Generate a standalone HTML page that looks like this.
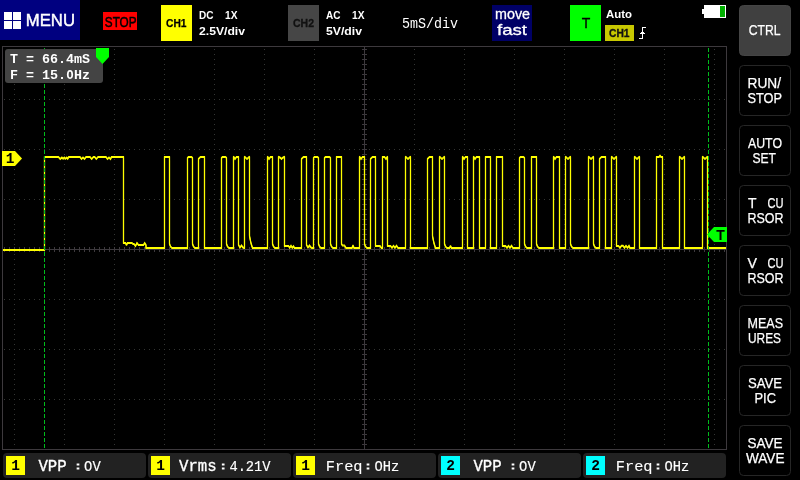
<!DOCTYPE html>
<html><head><meta charset="utf-8"><title>scope</title>
<style>html,body{margin:0;padding:0;background:#000;overflow:hidden}svg{display:block;will-change:transform}text{font-family:"Liberation Sans",sans-serif}.m{font-family:"Liberation Mono",monospace}</style></head><body>
<svg width="800" height="480" viewBox="0 0 800 480">
<rect x="0" y="0" width="800" height="480" fill="#000" />
<g shape-rendering="crispEdges" fill="#343634"><rect x="2" y="46" width="725" height="1" fill="#3d393d"/><rect x="2" y="449" width="725" height="1" fill="#3d393d"/><rect x="2" y="46" width="1" height="404" fill="#3d393d"/><rect x="726" y="46" width="1" height="404" fill="#3d393d"/><path d="M14 49h1v1h-1zM14 54h1v1h-1zM14 59h1v1h-1zM14 64h1v1h-1zM14 69h1v1h-1zM14 74h1v1h-1zM14 79h1v1h-1zM14 84h1v1h-1zM14 89h1v1h-1zM14 94h1v1h-1zM14 99h1v1h-1zM14 104h1v1h-1zM14 109h1v1h-1zM14 114h1v1h-1zM14 119h1v1h-1zM14 124h1v1h-1zM14 129h1v1h-1zM14 134h1v1h-1zM14 139h1v1h-1zM14 144h1v1h-1zM14 149h1v1h-1zM14 154h1v1h-1zM14 159h1v1h-1zM14 164h1v1h-1zM14 169h1v1h-1zM14 174h1v1h-1zM14 179h1v1h-1zM14 184h1v1h-1zM14 189h1v1h-1zM14 194h1v1h-1zM14 199h1v1h-1zM14 204h1v1h-1zM14 209h1v1h-1zM14 214h1v1h-1zM14 219h1v1h-1zM14 224h1v1h-1zM14 229h1v1h-1zM14 234h1v1h-1zM14 239h1v1h-1zM14 244h1v1h-1zM14 249h1v1h-1zM14 254h1v1h-1zM14 259h1v1h-1zM14 264h1v1h-1zM14 269h1v1h-1zM14 274h1v1h-1zM14 279h1v1h-1zM14 284h1v1h-1zM14 289h1v1h-1zM14 294h1v1h-1zM14 299h1v1h-1zM14 304h1v1h-1zM14 309h1v1h-1zM14 314h1v1h-1zM14 319h1v1h-1zM14 324h1v1h-1zM14 329h1v1h-1zM14 334h1v1h-1zM14 339h1v1h-1zM14 344h1v1h-1zM14 349h1v1h-1zM14 354h1v1h-1zM14 359h1v1h-1zM14 364h1v1h-1zM14 369h1v1h-1zM14 374h1v1h-1zM14 379h1v1h-1zM14 384h1v1h-1zM14 389h1v1h-1zM14 394h1v1h-1zM14 399h1v1h-1zM14 404h1v1h-1zM14 409h1v1h-1zM14 414h1v1h-1zM14 419h1v1h-1zM14 424h1v1h-1zM14 429h1v1h-1zM14 434h1v1h-1zM14 439h1v1h-1zM14 444h1v1h-1zM64 49h1v1h-1zM64 54h1v1h-1zM64 59h1v1h-1zM64 64h1v1h-1zM64 69h1v1h-1zM64 74h1v1h-1zM64 79h1v1h-1zM64 84h1v1h-1zM64 89h1v1h-1zM64 94h1v1h-1zM64 99h1v1h-1zM64 104h1v1h-1zM64 109h1v1h-1zM64 114h1v1h-1zM64 119h1v1h-1zM64 124h1v1h-1zM64 129h1v1h-1zM64 134h1v1h-1zM64 139h1v1h-1zM64 144h1v1h-1zM64 149h1v1h-1zM64 154h1v1h-1zM64 159h1v1h-1zM64 164h1v1h-1zM64 169h1v1h-1zM64 174h1v1h-1zM64 179h1v1h-1zM64 184h1v1h-1zM64 189h1v1h-1zM64 194h1v1h-1zM64 199h1v1h-1zM64 204h1v1h-1zM64 209h1v1h-1zM64 214h1v1h-1zM64 219h1v1h-1zM64 224h1v1h-1zM64 229h1v1h-1zM64 234h1v1h-1zM64 239h1v1h-1zM64 244h1v1h-1zM64 249h1v1h-1zM64 254h1v1h-1zM64 259h1v1h-1zM64 264h1v1h-1zM64 269h1v1h-1zM64 274h1v1h-1zM64 279h1v1h-1zM64 284h1v1h-1zM64 289h1v1h-1zM64 294h1v1h-1zM64 299h1v1h-1zM64 304h1v1h-1zM64 309h1v1h-1zM64 314h1v1h-1zM64 319h1v1h-1zM64 324h1v1h-1zM64 329h1v1h-1zM64 334h1v1h-1zM64 339h1v1h-1zM64 344h1v1h-1zM64 349h1v1h-1zM64 354h1v1h-1zM64 359h1v1h-1zM64 364h1v1h-1zM64 369h1v1h-1zM64 374h1v1h-1zM64 379h1v1h-1zM64 384h1v1h-1zM64 389h1v1h-1zM64 394h1v1h-1zM64 399h1v1h-1zM64 404h1v1h-1zM64 409h1v1h-1zM64 414h1v1h-1zM64 419h1v1h-1zM64 424h1v1h-1zM64 429h1v1h-1zM64 434h1v1h-1zM64 439h1v1h-1zM64 444h1v1h-1zM114 49h1v1h-1zM114 54h1v1h-1zM114 59h1v1h-1zM114 64h1v1h-1zM114 69h1v1h-1zM114 74h1v1h-1zM114 79h1v1h-1zM114 84h1v1h-1zM114 89h1v1h-1zM114 94h1v1h-1zM114 99h1v1h-1zM114 104h1v1h-1zM114 109h1v1h-1zM114 114h1v1h-1zM114 119h1v1h-1zM114 124h1v1h-1zM114 129h1v1h-1zM114 134h1v1h-1zM114 139h1v1h-1zM114 144h1v1h-1zM114 149h1v1h-1zM114 154h1v1h-1zM114 159h1v1h-1zM114 164h1v1h-1zM114 169h1v1h-1zM114 174h1v1h-1zM114 179h1v1h-1zM114 184h1v1h-1zM114 189h1v1h-1zM114 194h1v1h-1zM114 199h1v1h-1zM114 204h1v1h-1zM114 209h1v1h-1zM114 214h1v1h-1zM114 219h1v1h-1zM114 224h1v1h-1zM114 229h1v1h-1zM114 234h1v1h-1zM114 239h1v1h-1zM114 244h1v1h-1zM114 249h1v1h-1zM114 254h1v1h-1zM114 259h1v1h-1zM114 264h1v1h-1zM114 269h1v1h-1zM114 274h1v1h-1zM114 279h1v1h-1zM114 284h1v1h-1zM114 289h1v1h-1zM114 294h1v1h-1zM114 299h1v1h-1zM114 304h1v1h-1zM114 309h1v1h-1zM114 314h1v1h-1zM114 319h1v1h-1zM114 324h1v1h-1zM114 329h1v1h-1zM114 334h1v1h-1zM114 339h1v1h-1zM114 344h1v1h-1zM114 349h1v1h-1zM114 354h1v1h-1zM114 359h1v1h-1zM114 364h1v1h-1zM114 369h1v1h-1zM114 374h1v1h-1zM114 379h1v1h-1zM114 384h1v1h-1zM114 389h1v1h-1zM114 394h1v1h-1zM114 399h1v1h-1zM114 404h1v1h-1zM114 409h1v1h-1zM114 414h1v1h-1zM114 419h1v1h-1zM114 424h1v1h-1zM114 429h1v1h-1zM114 434h1v1h-1zM114 439h1v1h-1zM114 444h1v1h-1zM164 49h1v1h-1zM164 54h1v1h-1zM164 59h1v1h-1zM164 64h1v1h-1zM164 69h1v1h-1zM164 74h1v1h-1zM164 79h1v1h-1zM164 84h1v1h-1zM164 89h1v1h-1zM164 94h1v1h-1zM164 99h1v1h-1zM164 104h1v1h-1zM164 109h1v1h-1zM164 114h1v1h-1zM164 119h1v1h-1zM164 124h1v1h-1zM164 129h1v1h-1zM164 134h1v1h-1zM164 139h1v1h-1zM164 144h1v1h-1zM164 149h1v1h-1zM164 154h1v1h-1zM164 159h1v1h-1zM164 164h1v1h-1zM164 169h1v1h-1zM164 174h1v1h-1zM164 179h1v1h-1zM164 184h1v1h-1zM164 189h1v1h-1zM164 194h1v1h-1zM164 199h1v1h-1zM164 204h1v1h-1zM164 209h1v1h-1zM164 214h1v1h-1zM164 219h1v1h-1zM164 224h1v1h-1zM164 229h1v1h-1zM164 234h1v1h-1zM164 239h1v1h-1zM164 244h1v1h-1zM164 249h1v1h-1zM164 254h1v1h-1zM164 259h1v1h-1zM164 264h1v1h-1zM164 269h1v1h-1zM164 274h1v1h-1zM164 279h1v1h-1zM164 284h1v1h-1zM164 289h1v1h-1zM164 294h1v1h-1zM164 299h1v1h-1zM164 304h1v1h-1zM164 309h1v1h-1zM164 314h1v1h-1zM164 319h1v1h-1zM164 324h1v1h-1zM164 329h1v1h-1zM164 334h1v1h-1zM164 339h1v1h-1zM164 344h1v1h-1zM164 349h1v1h-1zM164 354h1v1h-1zM164 359h1v1h-1zM164 364h1v1h-1zM164 369h1v1h-1zM164 374h1v1h-1zM164 379h1v1h-1zM164 384h1v1h-1zM164 389h1v1h-1zM164 394h1v1h-1zM164 399h1v1h-1zM164 404h1v1h-1zM164 409h1v1h-1zM164 414h1v1h-1zM164 419h1v1h-1zM164 424h1v1h-1zM164 429h1v1h-1zM164 434h1v1h-1zM164 439h1v1h-1zM164 444h1v1h-1zM214 49h1v1h-1zM214 54h1v1h-1zM214 59h1v1h-1zM214 64h1v1h-1zM214 69h1v1h-1zM214 74h1v1h-1zM214 79h1v1h-1zM214 84h1v1h-1zM214 89h1v1h-1zM214 94h1v1h-1zM214 99h1v1h-1zM214 104h1v1h-1zM214 109h1v1h-1zM214 114h1v1h-1zM214 119h1v1h-1zM214 124h1v1h-1zM214 129h1v1h-1zM214 134h1v1h-1zM214 139h1v1h-1zM214 144h1v1h-1zM214 149h1v1h-1zM214 154h1v1h-1zM214 159h1v1h-1zM214 164h1v1h-1zM214 169h1v1h-1zM214 174h1v1h-1zM214 179h1v1h-1zM214 184h1v1h-1zM214 189h1v1h-1zM214 194h1v1h-1zM214 199h1v1h-1zM214 204h1v1h-1zM214 209h1v1h-1zM214 214h1v1h-1zM214 219h1v1h-1zM214 224h1v1h-1zM214 229h1v1h-1zM214 234h1v1h-1zM214 239h1v1h-1zM214 244h1v1h-1zM214 249h1v1h-1zM214 254h1v1h-1zM214 259h1v1h-1zM214 264h1v1h-1zM214 269h1v1h-1zM214 274h1v1h-1zM214 279h1v1h-1zM214 284h1v1h-1zM214 289h1v1h-1zM214 294h1v1h-1zM214 299h1v1h-1zM214 304h1v1h-1zM214 309h1v1h-1zM214 314h1v1h-1zM214 319h1v1h-1zM214 324h1v1h-1zM214 329h1v1h-1zM214 334h1v1h-1zM214 339h1v1h-1zM214 344h1v1h-1zM214 349h1v1h-1zM214 354h1v1h-1zM214 359h1v1h-1zM214 364h1v1h-1zM214 369h1v1h-1zM214 374h1v1h-1zM214 379h1v1h-1zM214 384h1v1h-1zM214 389h1v1h-1zM214 394h1v1h-1zM214 399h1v1h-1zM214 404h1v1h-1zM214 409h1v1h-1zM214 414h1v1h-1zM214 419h1v1h-1zM214 424h1v1h-1zM214 429h1v1h-1zM214 434h1v1h-1zM214 439h1v1h-1zM214 444h1v1h-1zM264 49h1v1h-1zM264 54h1v1h-1zM264 59h1v1h-1zM264 64h1v1h-1zM264 69h1v1h-1zM264 74h1v1h-1zM264 79h1v1h-1zM264 84h1v1h-1zM264 89h1v1h-1zM264 94h1v1h-1zM264 99h1v1h-1zM264 104h1v1h-1zM264 109h1v1h-1zM264 114h1v1h-1zM264 119h1v1h-1zM264 124h1v1h-1zM264 129h1v1h-1zM264 134h1v1h-1zM264 139h1v1h-1zM264 144h1v1h-1zM264 149h1v1h-1zM264 154h1v1h-1zM264 159h1v1h-1zM264 164h1v1h-1zM264 169h1v1h-1zM264 174h1v1h-1zM264 179h1v1h-1zM264 184h1v1h-1zM264 189h1v1h-1zM264 194h1v1h-1zM264 199h1v1h-1zM264 204h1v1h-1zM264 209h1v1h-1zM264 214h1v1h-1zM264 219h1v1h-1zM264 224h1v1h-1zM264 229h1v1h-1zM264 234h1v1h-1zM264 239h1v1h-1zM264 244h1v1h-1zM264 249h1v1h-1zM264 254h1v1h-1zM264 259h1v1h-1zM264 264h1v1h-1zM264 269h1v1h-1zM264 274h1v1h-1zM264 279h1v1h-1zM264 284h1v1h-1zM264 289h1v1h-1zM264 294h1v1h-1zM264 299h1v1h-1zM264 304h1v1h-1zM264 309h1v1h-1zM264 314h1v1h-1zM264 319h1v1h-1zM264 324h1v1h-1zM264 329h1v1h-1zM264 334h1v1h-1zM264 339h1v1h-1zM264 344h1v1h-1zM264 349h1v1h-1zM264 354h1v1h-1zM264 359h1v1h-1zM264 364h1v1h-1zM264 369h1v1h-1zM264 374h1v1h-1zM264 379h1v1h-1zM264 384h1v1h-1zM264 389h1v1h-1zM264 394h1v1h-1zM264 399h1v1h-1zM264 404h1v1h-1zM264 409h1v1h-1zM264 414h1v1h-1zM264 419h1v1h-1zM264 424h1v1h-1zM264 429h1v1h-1zM264 434h1v1h-1zM264 439h1v1h-1zM264 444h1v1h-1zM314 49h1v1h-1zM314 54h1v1h-1zM314 59h1v1h-1zM314 64h1v1h-1zM314 69h1v1h-1zM314 74h1v1h-1zM314 79h1v1h-1zM314 84h1v1h-1zM314 89h1v1h-1zM314 94h1v1h-1zM314 99h1v1h-1zM314 104h1v1h-1zM314 109h1v1h-1zM314 114h1v1h-1zM314 119h1v1h-1zM314 124h1v1h-1zM314 129h1v1h-1zM314 134h1v1h-1zM314 139h1v1h-1zM314 144h1v1h-1zM314 149h1v1h-1zM314 154h1v1h-1zM314 159h1v1h-1zM314 164h1v1h-1zM314 169h1v1h-1zM314 174h1v1h-1zM314 179h1v1h-1zM314 184h1v1h-1zM314 189h1v1h-1zM314 194h1v1h-1zM314 199h1v1h-1zM314 204h1v1h-1zM314 209h1v1h-1zM314 214h1v1h-1zM314 219h1v1h-1zM314 224h1v1h-1zM314 229h1v1h-1zM314 234h1v1h-1zM314 239h1v1h-1zM314 244h1v1h-1zM314 249h1v1h-1zM314 254h1v1h-1zM314 259h1v1h-1zM314 264h1v1h-1zM314 269h1v1h-1zM314 274h1v1h-1zM314 279h1v1h-1zM314 284h1v1h-1zM314 289h1v1h-1zM314 294h1v1h-1zM314 299h1v1h-1zM314 304h1v1h-1zM314 309h1v1h-1zM314 314h1v1h-1zM314 319h1v1h-1zM314 324h1v1h-1zM314 329h1v1h-1zM314 334h1v1h-1zM314 339h1v1h-1zM314 344h1v1h-1zM314 349h1v1h-1zM314 354h1v1h-1zM314 359h1v1h-1zM314 364h1v1h-1zM314 369h1v1h-1zM314 374h1v1h-1zM314 379h1v1h-1zM314 384h1v1h-1zM314 389h1v1h-1zM314 394h1v1h-1zM314 399h1v1h-1zM314 404h1v1h-1zM314 409h1v1h-1zM314 414h1v1h-1zM314 419h1v1h-1zM314 424h1v1h-1zM314 429h1v1h-1zM314 434h1v1h-1zM314 439h1v1h-1zM314 444h1v1h-1zM414 49h1v1h-1zM414 54h1v1h-1zM414 59h1v1h-1zM414 64h1v1h-1zM414 69h1v1h-1zM414 74h1v1h-1zM414 79h1v1h-1zM414 84h1v1h-1zM414 89h1v1h-1zM414 94h1v1h-1zM414 99h1v1h-1zM414 104h1v1h-1zM414 109h1v1h-1zM414 114h1v1h-1zM414 119h1v1h-1zM414 124h1v1h-1zM414 129h1v1h-1zM414 134h1v1h-1zM414 139h1v1h-1zM414 144h1v1h-1zM414 149h1v1h-1zM414 154h1v1h-1zM414 159h1v1h-1zM414 164h1v1h-1zM414 169h1v1h-1zM414 174h1v1h-1zM414 179h1v1h-1zM414 184h1v1h-1zM414 189h1v1h-1zM414 194h1v1h-1zM414 199h1v1h-1zM414 204h1v1h-1zM414 209h1v1h-1zM414 214h1v1h-1zM414 219h1v1h-1zM414 224h1v1h-1zM414 229h1v1h-1zM414 234h1v1h-1zM414 239h1v1h-1zM414 244h1v1h-1zM414 249h1v1h-1zM414 254h1v1h-1zM414 259h1v1h-1zM414 264h1v1h-1zM414 269h1v1h-1zM414 274h1v1h-1zM414 279h1v1h-1zM414 284h1v1h-1zM414 289h1v1h-1zM414 294h1v1h-1zM414 299h1v1h-1zM414 304h1v1h-1zM414 309h1v1h-1zM414 314h1v1h-1zM414 319h1v1h-1zM414 324h1v1h-1zM414 329h1v1h-1zM414 334h1v1h-1zM414 339h1v1h-1zM414 344h1v1h-1zM414 349h1v1h-1zM414 354h1v1h-1zM414 359h1v1h-1zM414 364h1v1h-1zM414 369h1v1h-1zM414 374h1v1h-1zM414 379h1v1h-1zM414 384h1v1h-1zM414 389h1v1h-1zM414 394h1v1h-1zM414 399h1v1h-1zM414 404h1v1h-1zM414 409h1v1h-1zM414 414h1v1h-1zM414 419h1v1h-1zM414 424h1v1h-1zM414 429h1v1h-1zM414 434h1v1h-1zM414 439h1v1h-1zM414 444h1v1h-1zM464 49h1v1h-1zM464 54h1v1h-1zM464 59h1v1h-1zM464 64h1v1h-1zM464 69h1v1h-1zM464 74h1v1h-1zM464 79h1v1h-1zM464 84h1v1h-1zM464 89h1v1h-1zM464 94h1v1h-1zM464 99h1v1h-1zM464 104h1v1h-1zM464 109h1v1h-1zM464 114h1v1h-1zM464 119h1v1h-1zM464 124h1v1h-1zM464 129h1v1h-1zM464 134h1v1h-1zM464 139h1v1h-1zM464 144h1v1h-1zM464 149h1v1h-1zM464 154h1v1h-1zM464 159h1v1h-1zM464 164h1v1h-1zM464 169h1v1h-1zM464 174h1v1h-1zM464 179h1v1h-1zM464 184h1v1h-1zM464 189h1v1h-1zM464 194h1v1h-1zM464 199h1v1h-1zM464 204h1v1h-1zM464 209h1v1h-1zM464 214h1v1h-1zM464 219h1v1h-1zM464 224h1v1h-1zM464 229h1v1h-1zM464 234h1v1h-1zM464 239h1v1h-1zM464 244h1v1h-1zM464 249h1v1h-1zM464 254h1v1h-1zM464 259h1v1h-1zM464 264h1v1h-1zM464 269h1v1h-1zM464 274h1v1h-1zM464 279h1v1h-1zM464 284h1v1h-1zM464 289h1v1h-1zM464 294h1v1h-1zM464 299h1v1h-1zM464 304h1v1h-1zM464 309h1v1h-1zM464 314h1v1h-1zM464 319h1v1h-1zM464 324h1v1h-1zM464 329h1v1h-1zM464 334h1v1h-1zM464 339h1v1h-1zM464 344h1v1h-1zM464 349h1v1h-1zM464 354h1v1h-1zM464 359h1v1h-1zM464 364h1v1h-1zM464 369h1v1h-1zM464 374h1v1h-1zM464 379h1v1h-1zM464 384h1v1h-1zM464 389h1v1h-1zM464 394h1v1h-1zM464 399h1v1h-1zM464 404h1v1h-1zM464 409h1v1h-1zM464 414h1v1h-1zM464 419h1v1h-1zM464 424h1v1h-1zM464 429h1v1h-1zM464 434h1v1h-1zM464 439h1v1h-1zM464 444h1v1h-1zM514 49h1v1h-1zM514 54h1v1h-1zM514 59h1v1h-1zM514 64h1v1h-1zM514 69h1v1h-1zM514 74h1v1h-1zM514 79h1v1h-1zM514 84h1v1h-1zM514 89h1v1h-1zM514 94h1v1h-1zM514 99h1v1h-1zM514 104h1v1h-1zM514 109h1v1h-1zM514 114h1v1h-1zM514 119h1v1h-1zM514 124h1v1h-1zM514 129h1v1h-1zM514 134h1v1h-1zM514 139h1v1h-1zM514 144h1v1h-1zM514 149h1v1h-1zM514 154h1v1h-1zM514 159h1v1h-1zM514 164h1v1h-1zM514 169h1v1h-1zM514 174h1v1h-1zM514 179h1v1h-1zM514 184h1v1h-1zM514 189h1v1h-1zM514 194h1v1h-1zM514 199h1v1h-1zM514 204h1v1h-1zM514 209h1v1h-1zM514 214h1v1h-1zM514 219h1v1h-1zM514 224h1v1h-1zM514 229h1v1h-1zM514 234h1v1h-1zM514 239h1v1h-1zM514 244h1v1h-1zM514 249h1v1h-1zM514 254h1v1h-1zM514 259h1v1h-1zM514 264h1v1h-1zM514 269h1v1h-1zM514 274h1v1h-1zM514 279h1v1h-1zM514 284h1v1h-1zM514 289h1v1h-1zM514 294h1v1h-1zM514 299h1v1h-1zM514 304h1v1h-1zM514 309h1v1h-1zM514 314h1v1h-1zM514 319h1v1h-1zM514 324h1v1h-1zM514 329h1v1h-1zM514 334h1v1h-1zM514 339h1v1h-1zM514 344h1v1h-1zM514 349h1v1h-1zM514 354h1v1h-1zM514 359h1v1h-1zM514 364h1v1h-1zM514 369h1v1h-1zM514 374h1v1h-1zM514 379h1v1h-1zM514 384h1v1h-1zM514 389h1v1h-1zM514 394h1v1h-1zM514 399h1v1h-1zM514 404h1v1h-1zM514 409h1v1h-1zM514 414h1v1h-1zM514 419h1v1h-1zM514 424h1v1h-1zM514 429h1v1h-1zM514 434h1v1h-1zM514 439h1v1h-1zM514 444h1v1h-1zM564 49h1v1h-1zM564 54h1v1h-1zM564 59h1v1h-1zM564 64h1v1h-1zM564 69h1v1h-1zM564 74h1v1h-1zM564 79h1v1h-1zM564 84h1v1h-1zM564 89h1v1h-1zM564 94h1v1h-1zM564 99h1v1h-1zM564 104h1v1h-1zM564 109h1v1h-1zM564 114h1v1h-1zM564 119h1v1h-1zM564 124h1v1h-1zM564 129h1v1h-1zM564 134h1v1h-1zM564 139h1v1h-1zM564 144h1v1h-1zM564 149h1v1h-1zM564 154h1v1h-1zM564 159h1v1h-1zM564 164h1v1h-1zM564 169h1v1h-1zM564 174h1v1h-1zM564 179h1v1h-1zM564 184h1v1h-1zM564 189h1v1h-1zM564 194h1v1h-1zM564 199h1v1h-1zM564 204h1v1h-1zM564 209h1v1h-1zM564 214h1v1h-1zM564 219h1v1h-1zM564 224h1v1h-1zM564 229h1v1h-1zM564 234h1v1h-1zM564 239h1v1h-1zM564 244h1v1h-1zM564 249h1v1h-1zM564 254h1v1h-1zM564 259h1v1h-1zM564 264h1v1h-1zM564 269h1v1h-1zM564 274h1v1h-1zM564 279h1v1h-1zM564 284h1v1h-1zM564 289h1v1h-1zM564 294h1v1h-1zM564 299h1v1h-1zM564 304h1v1h-1zM564 309h1v1h-1zM564 314h1v1h-1zM564 319h1v1h-1zM564 324h1v1h-1zM564 329h1v1h-1zM564 334h1v1h-1zM564 339h1v1h-1zM564 344h1v1h-1zM564 349h1v1h-1zM564 354h1v1h-1zM564 359h1v1h-1zM564 364h1v1h-1zM564 369h1v1h-1zM564 374h1v1h-1zM564 379h1v1h-1zM564 384h1v1h-1zM564 389h1v1h-1zM564 394h1v1h-1zM564 399h1v1h-1zM564 404h1v1h-1zM564 409h1v1h-1zM564 414h1v1h-1zM564 419h1v1h-1zM564 424h1v1h-1zM564 429h1v1h-1zM564 434h1v1h-1zM564 439h1v1h-1zM564 444h1v1h-1zM614 49h1v1h-1zM614 54h1v1h-1zM614 59h1v1h-1zM614 64h1v1h-1zM614 69h1v1h-1zM614 74h1v1h-1zM614 79h1v1h-1zM614 84h1v1h-1zM614 89h1v1h-1zM614 94h1v1h-1zM614 99h1v1h-1zM614 104h1v1h-1zM614 109h1v1h-1zM614 114h1v1h-1zM614 119h1v1h-1zM614 124h1v1h-1zM614 129h1v1h-1zM614 134h1v1h-1zM614 139h1v1h-1zM614 144h1v1h-1zM614 149h1v1h-1zM614 154h1v1h-1zM614 159h1v1h-1zM614 164h1v1h-1zM614 169h1v1h-1zM614 174h1v1h-1zM614 179h1v1h-1zM614 184h1v1h-1zM614 189h1v1h-1zM614 194h1v1h-1zM614 199h1v1h-1zM614 204h1v1h-1zM614 209h1v1h-1zM614 214h1v1h-1zM614 219h1v1h-1zM614 224h1v1h-1zM614 229h1v1h-1zM614 234h1v1h-1zM614 239h1v1h-1zM614 244h1v1h-1zM614 249h1v1h-1zM614 254h1v1h-1zM614 259h1v1h-1zM614 264h1v1h-1zM614 269h1v1h-1zM614 274h1v1h-1zM614 279h1v1h-1zM614 284h1v1h-1zM614 289h1v1h-1zM614 294h1v1h-1zM614 299h1v1h-1zM614 304h1v1h-1zM614 309h1v1h-1zM614 314h1v1h-1zM614 319h1v1h-1zM614 324h1v1h-1zM614 329h1v1h-1zM614 334h1v1h-1zM614 339h1v1h-1zM614 344h1v1h-1zM614 349h1v1h-1zM614 354h1v1h-1zM614 359h1v1h-1zM614 364h1v1h-1zM614 369h1v1h-1zM614 374h1v1h-1zM614 379h1v1h-1zM614 384h1v1h-1zM614 389h1v1h-1zM614 394h1v1h-1zM614 399h1v1h-1zM614 404h1v1h-1zM614 409h1v1h-1zM614 414h1v1h-1zM614 419h1v1h-1zM614 424h1v1h-1zM614 429h1v1h-1zM614 434h1v1h-1zM614 439h1v1h-1zM614 444h1v1h-1zM664 49h1v1h-1zM664 54h1v1h-1zM664 59h1v1h-1zM664 64h1v1h-1zM664 69h1v1h-1zM664 74h1v1h-1zM664 79h1v1h-1zM664 84h1v1h-1zM664 89h1v1h-1zM664 94h1v1h-1zM664 99h1v1h-1zM664 104h1v1h-1zM664 109h1v1h-1zM664 114h1v1h-1zM664 119h1v1h-1zM664 124h1v1h-1zM664 129h1v1h-1zM664 134h1v1h-1zM664 139h1v1h-1zM664 144h1v1h-1zM664 149h1v1h-1zM664 154h1v1h-1zM664 159h1v1h-1zM664 164h1v1h-1zM664 169h1v1h-1zM664 174h1v1h-1zM664 179h1v1h-1zM664 184h1v1h-1zM664 189h1v1h-1zM664 194h1v1h-1zM664 199h1v1h-1zM664 204h1v1h-1zM664 209h1v1h-1zM664 214h1v1h-1zM664 219h1v1h-1zM664 224h1v1h-1zM664 229h1v1h-1zM664 234h1v1h-1zM664 239h1v1h-1zM664 244h1v1h-1zM664 249h1v1h-1zM664 254h1v1h-1zM664 259h1v1h-1zM664 264h1v1h-1zM664 269h1v1h-1zM664 274h1v1h-1zM664 279h1v1h-1zM664 284h1v1h-1zM664 289h1v1h-1zM664 294h1v1h-1zM664 299h1v1h-1zM664 304h1v1h-1zM664 309h1v1h-1zM664 314h1v1h-1zM664 319h1v1h-1zM664 324h1v1h-1zM664 329h1v1h-1zM664 334h1v1h-1zM664 339h1v1h-1zM664 344h1v1h-1zM664 349h1v1h-1zM664 354h1v1h-1zM664 359h1v1h-1zM664 364h1v1h-1zM664 369h1v1h-1zM664 374h1v1h-1zM664 379h1v1h-1zM664 384h1v1h-1zM664 389h1v1h-1zM664 394h1v1h-1zM664 399h1v1h-1zM664 404h1v1h-1zM664 409h1v1h-1zM664 414h1v1h-1zM664 419h1v1h-1zM664 424h1v1h-1zM664 429h1v1h-1zM664 434h1v1h-1zM664 439h1v1h-1zM664 444h1v1h-1zM714 49h1v1h-1zM714 54h1v1h-1zM714 59h1v1h-1zM714 64h1v1h-1zM714 69h1v1h-1zM714 74h1v1h-1zM714 79h1v1h-1zM714 84h1v1h-1zM714 89h1v1h-1zM714 94h1v1h-1zM714 99h1v1h-1zM714 104h1v1h-1zM714 109h1v1h-1zM714 114h1v1h-1zM714 119h1v1h-1zM714 124h1v1h-1zM714 129h1v1h-1zM714 134h1v1h-1zM714 139h1v1h-1zM714 144h1v1h-1zM714 149h1v1h-1zM714 154h1v1h-1zM714 159h1v1h-1zM714 164h1v1h-1zM714 169h1v1h-1zM714 174h1v1h-1zM714 179h1v1h-1zM714 184h1v1h-1zM714 189h1v1h-1zM714 194h1v1h-1zM714 199h1v1h-1zM714 204h1v1h-1zM714 209h1v1h-1zM714 214h1v1h-1zM714 219h1v1h-1zM714 224h1v1h-1zM714 229h1v1h-1zM714 234h1v1h-1zM714 239h1v1h-1zM714 244h1v1h-1zM714 249h1v1h-1zM714 254h1v1h-1zM714 259h1v1h-1zM714 264h1v1h-1zM714 269h1v1h-1zM714 274h1v1h-1zM714 279h1v1h-1zM714 284h1v1h-1zM714 289h1v1h-1zM714 294h1v1h-1zM714 299h1v1h-1zM714 304h1v1h-1zM714 309h1v1h-1zM714 314h1v1h-1zM714 319h1v1h-1zM714 324h1v1h-1zM714 329h1v1h-1zM714 334h1v1h-1zM714 339h1v1h-1zM714 344h1v1h-1zM714 349h1v1h-1zM714 354h1v1h-1zM714 359h1v1h-1zM714 364h1v1h-1zM714 369h1v1h-1zM714 374h1v1h-1zM714 379h1v1h-1zM714 384h1v1h-1zM714 389h1v1h-1zM714 394h1v1h-1zM714 399h1v1h-1zM714 404h1v1h-1zM714 409h1v1h-1zM714 414h1v1h-1zM714 419h1v1h-1zM714 424h1v1h-1zM714 429h1v1h-1zM714 434h1v1h-1zM714 439h1v1h-1zM714 444h1v1h-1zM4 99h1v1h-1zM9 99h1v1h-1zM14 99h1v1h-1zM19 99h1v1h-1zM24 99h1v1h-1zM29 99h1v1h-1zM34 99h1v1h-1zM39 99h1v1h-1zM44 99h1v1h-1zM49 99h1v1h-1zM54 99h1v1h-1zM59 99h1v1h-1zM64 99h1v1h-1zM69 99h1v1h-1zM74 99h1v1h-1zM79 99h1v1h-1zM84 99h1v1h-1zM89 99h1v1h-1zM94 99h1v1h-1zM99 99h1v1h-1zM104 99h1v1h-1zM109 99h1v1h-1zM114 99h1v1h-1zM119 99h1v1h-1zM124 99h1v1h-1zM129 99h1v1h-1zM134 99h1v1h-1zM139 99h1v1h-1zM144 99h1v1h-1zM149 99h1v1h-1zM154 99h1v1h-1zM159 99h1v1h-1zM164 99h1v1h-1zM169 99h1v1h-1zM174 99h1v1h-1zM179 99h1v1h-1zM184 99h1v1h-1zM189 99h1v1h-1zM194 99h1v1h-1zM199 99h1v1h-1zM204 99h1v1h-1zM209 99h1v1h-1zM214 99h1v1h-1zM219 99h1v1h-1zM224 99h1v1h-1zM229 99h1v1h-1zM234 99h1v1h-1zM239 99h1v1h-1zM244 99h1v1h-1zM249 99h1v1h-1zM254 99h1v1h-1zM259 99h1v1h-1zM264 99h1v1h-1zM269 99h1v1h-1zM274 99h1v1h-1zM279 99h1v1h-1zM284 99h1v1h-1zM289 99h1v1h-1zM294 99h1v1h-1zM299 99h1v1h-1zM304 99h1v1h-1zM309 99h1v1h-1zM314 99h1v1h-1zM319 99h1v1h-1zM324 99h1v1h-1zM329 99h1v1h-1zM334 99h1v1h-1zM339 99h1v1h-1zM344 99h1v1h-1zM349 99h1v1h-1zM354 99h1v1h-1zM359 99h1v1h-1zM364 99h1v1h-1zM369 99h1v1h-1zM374 99h1v1h-1zM379 99h1v1h-1zM384 99h1v1h-1zM389 99h1v1h-1zM394 99h1v1h-1zM399 99h1v1h-1zM404 99h1v1h-1zM409 99h1v1h-1zM414 99h1v1h-1zM419 99h1v1h-1zM424 99h1v1h-1zM429 99h1v1h-1zM434 99h1v1h-1zM439 99h1v1h-1zM444 99h1v1h-1zM449 99h1v1h-1zM454 99h1v1h-1zM459 99h1v1h-1zM464 99h1v1h-1zM469 99h1v1h-1zM474 99h1v1h-1zM479 99h1v1h-1zM484 99h1v1h-1zM489 99h1v1h-1zM494 99h1v1h-1zM499 99h1v1h-1zM504 99h1v1h-1zM509 99h1v1h-1zM514 99h1v1h-1zM519 99h1v1h-1zM524 99h1v1h-1zM529 99h1v1h-1zM534 99h1v1h-1zM539 99h1v1h-1zM544 99h1v1h-1zM549 99h1v1h-1zM554 99h1v1h-1zM559 99h1v1h-1zM564 99h1v1h-1zM569 99h1v1h-1zM574 99h1v1h-1zM579 99h1v1h-1zM584 99h1v1h-1zM589 99h1v1h-1zM594 99h1v1h-1zM599 99h1v1h-1zM604 99h1v1h-1zM609 99h1v1h-1zM614 99h1v1h-1zM619 99h1v1h-1zM624 99h1v1h-1zM629 99h1v1h-1zM634 99h1v1h-1zM639 99h1v1h-1zM644 99h1v1h-1zM649 99h1v1h-1zM654 99h1v1h-1zM659 99h1v1h-1zM664 99h1v1h-1zM669 99h1v1h-1zM674 99h1v1h-1zM679 99h1v1h-1zM684 99h1v1h-1zM689 99h1v1h-1zM694 99h1v1h-1zM699 99h1v1h-1zM704 99h1v1h-1zM709 99h1v1h-1zM714 99h1v1h-1zM719 99h1v1h-1zM724 99h1v1h-1zM4 149h1v1h-1zM9 149h1v1h-1zM14 149h1v1h-1zM19 149h1v1h-1zM24 149h1v1h-1zM29 149h1v1h-1zM34 149h1v1h-1zM39 149h1v1h-1zM44 149h1v1h-1zM49 149h1v1h-1zM54 149h1v1h-1zM59 149h1v1h-1zM64 149h1v1h-1zM69 149h1v1h-1zM74 149h1v1h-1zM79 149h1v1h-1zM84 149h1v1h-1zM89 149h1v1h-1zM94 149h1v1h-1zM99 149h1v1h-1zM104 149h1v1h-1zM109 149h1v1h-1zM114 149h1v1h-1zM119 149h1v1h-1zM124 149h1v1h-1zM129 149h1v1h-1zM134 149h1v1h-1zM139 149h1v1h-1zM144 149h1v1h-1zM149 149h1v1h-1zM154 149h1v1h-1zM159 149h1v1h-1zM164 149h1v1h-1zM169 149h1v1h-1zM174 149h1v1h-1zM179 149h1v1h-1zM184 149h1v1h-1zM189 149h1v1h-1zM194 149h1v1h-1zM199 149h1v1h-1zM204 149h1v1h-1zM209 149h1v1h-1zM214 149h1v1h-1zM219 149h1v1h-1zM224 149h1v1h-1zM229 149h1v1h-1zM234 149h1v1h-1zM239 149h1v1h-1zM244 149h1v1h-1zM249 149h1v1h-1zM254 149h1v1h-1zM259 149h1v1h-1zM264 149h1v1h-1zM269 149h1v1h-1zM274 149h1v1h-1zM279 149h1v1h-1zM284 149h1v1h-1zM289 149h1v1h-1zM294 149h1v1h-1zM299 149h1v1h-1zM304 149h1v1h-1zM309 149h1v1h-1zM314 149h1v1h-1zM319 149h1v1h-1zM324 149h1v1h-1zM329 149h1v1h-1zM334 149h1v1h-1zM339 149h1v1h-1zM344 149h1v1h-1zM349 149h1v1h-1zM354 149h1v1h-1zM359 149h1v1h-1zM364 149h1v1h-1zM369 149h1v1h-1zM374 149h1v1h-1zM379 149h1v1h-1zM384 149h1v1h-1zM389 149h1v1h-1zM394 149h1v1h-1zM399 149h1v1h-1zM404 149h1v1h-1zM409 149h1v1h-1zM414 149h1v1h-1zM419 149h1v1h-1zM424 149h1v1h-1zM429 149h1v1h-1zM434 149h1v1h-1zM439 149h1v1h-1zM444 149h1v1h-1zM449 149h1v1h-1zM454 149h1v1h-1zM459 149h1v1h-1zM464 149h1v1h-1zM469 149h1v1h-1zM474 149h1v1h-1zM479 149h1v1h-1zM484 149h1v1h-1zM489 149h1v1h-1zM494 149h1v1h-1zM499 149h1v1h-1zM504 149h1v1h-1zM509 149h1v1h-1zM514 149h1v1h-1zM519 149h1v1h-1zM524 149h1v1h-1zM529 149h1v1h-1zM534 149h1v1h-1zM539 149h1v1h-1zM544 149h1v1h-1zM549 149h1v1h-1zM554 149h1v1h-1zM559 149h1v1h-1zM564 149h1v1h-1zM569 149h1v1h-1zM574 149h1v1h-1zM579 149h1v1h-1zM584 149h1v1h-1zM589 149h1v1h-1zM594 149h1v1h-1zM599 149h1v1h-1zM604 149h1v1h-1zM609 149h1v1h-1zM614 149h1v1h-1zM619 149h1v1h-1zM624 149h1v1h-1zM629 149h1v1h-1zM634 149h1v1h-1zM639 149h1v1h-1zM644 149h1v1h-1zM649 149h1v1h-1zM654 149h1v1h-1zM659 149h1v1h-1zM664 149h1v1h-1zM669 149h1v1h-1zM674 149h1v1h-1zM679 149h1v1h-1zM684 149h1v1h-1zM689 149h1v1h-1zM694 149h1v1h-1zM699 149h1v1h-1zM704 149h1v1h-1zM709 149h1v1h-1zM714 149h1v1h-1zM719 149h1v1h-1zM724 149h1v1h-1zM4 199h1v1h-1zM9 199h1v1h-1zM14 199h1v1h-1zM19 199h1v1h-1zM24 199h1v1h-1zM29 199h1v1h-1zM34 199h1v1h-1zM39 199h1v1h-1zM44 199h1v1h-1zM49 199h1v1h-1zM54 199h1v1h-1zM59 199h1v1h-1zM64 199h1v1h-1zM69 199h1v1h-1zM74 199h1v1h-1zM79 199h1v1h-1zM84 199h1v1h-1zM89 199h1v1h-1zM94 199h1v1h-1zM99 199h1v1h-1zM104 199h1v1h-1zM109 199h1v1h-1zM114 199h1v1h-1zM119 199h1v1h-1zM124 199h1v1h-1zM129 199h1v1h-1zM134 199h1v1h-1zM139 199h1v1h-1zM144 199h1v1h-1zM149 199h1v1h-1zM154 199h1v1h-1zM159 199h1v1h-1zM164 199h1v1h-1zM169 199h1v1h-1zM174 199h1v1h-1zM179 199h1v1h-1zM184 199h1v1h-1zM189 199h1v1h-1zM194 199h1v1h-1zM199 199h1v1h-1zM204 199h1v1h-1zM209 199h1v1h-1zM214 199h1v1h-1zM219 199h1v1h-1zM224 199h1v1h-1zM229 199h1v1h-1zM234 199h1v1h-1zM239 199h1v1h-1zM244 199h1v1h-1zM249 199h1v1h-1zM254 199h1v1h-1zM259 199h1v1h-1zM264 199h1v1h-1zM269 199h1v1h-1zM274 199h1v1h-1zM279 199h1v1h-1zM284 199h1v1h-1zM289 199h1v1h-1zM294 199h1v1h-1zM299 199h1v1h-1zM304 199h1v1h-1zM309 199h1v1h-1zM314 199h1v1h-1zM319 199h1v1h-1zM324 199h1v1h-1zM329 199h1v1h-1zM334 199h1v1h-1zM339 199h1v1h-1zM344 199h1v1h-1zM349 199h1v1h-1zM354 199h1v1h-1zM359 199h1v1h-1zM364 199h1v1h-1zM369 199h1v1h-1zM374 199h1v1h-1zM379 199h1v1h-1zM384 199h1v1h-1zM389 199h1v1h-1zM394 199h1v1h-1zM399 199h1v1h-1zM404 199h1v1h-1zM409 199h1v1h-1zM414 199h1v1h-1zM419 199h1v1h-1zM424 199h1v1h-1zM429 199h1v1h-1zM434 199h1v1h-1zM439 199h1v1h-1zM444 199h1v1h-1zM449 199h1v1h-1zM454 199h1v1h-1zM459 199h1v1h-1zM464 199h1v1h-1zM469 199h1v1h-1zM474 199h1v1h-1zM479 199h1v1h-1zM484 199h1v1h-1zM489 199h1v1h-1zM494 199h1v1h-1zM499 199h1v1h-1zM504 199h1v1h-1zM509 199h1v1h-1zM514 199h1v1h-1zM519 199h1v1h-1zM524 199h1v1h-1zM529 199h1v1h-1zM534 199h1v1h-1zM539 199h1v1h-1zM544 199h1v1h-1zM549 199h1v1h-1zM554 199h1v1h-1zM559 199h1v1h-1zM564 199h1v1h-1zM569 199h1v1h-1zM574 199h1v1h-1zM579 199h1v1h-1zM584 199h1v1h-1zM589 199h1v1h-1zM594 199h1v1h-1zM599 199h1v1h-1zM604 199h1v1h-1zM609 199h1v1h-1zM614 199h1v1h-1zM619 199h1v1h-1zM624 199h1v1h-1zM629 199h1v1h-1zM634 199h1v1h-1zM639 199h1v1h-1zM644 199h1v1h-1zM649 199h1v1h-1zM654 199h1v1h-1zM659 199h1v1h-1zM664 199h1v1h-1zM669 199h1v1h-1zM674 199h1v1h-1zM679 199h1v1h-1zM684 199h1v1h-1zM689 199h1v1h-1zM694 199h1v1h-1zM699 199h1v1h-1zM704 199h1v1h-1zM709 199h1v1h-1zM714 199h1v1h-1zM719 199h1v1h-1zM724 199h1v1h-1zM4 299h1v1h-1zM9 299h1v1h-1zM14 299h1v1h-1zM19 299h1v1h-1zM24 299h1v1h-1zM29 299h1v1h-1zM34 299h1v1h-1zM39 299h1v1h-1zM44 299h1v1h-1zM49 299h1v1h-1zM54 299h1v1h-1zM59 299h1v1h-1zM64 299h1v1h-1zM69 299h1v1h-1zM74 299h1v1h-1zM79 299h1v1h-1zM84 299h1v1h-1zM89 299h1v1h-1zM94 299h1v1h-1zM99 299h1v1h-1zM104 299h1v1h-1zM109 299h1v1h-1zM114 299h1v1h-1zM119 299h1v1h-1zM124 299h1v1h-1zM129 299h1v1h-1zM134 299h1v1h-1zM139 299h1v1h-1zM144 299h1v1h-1zM149 299h1v1h-1zM154 299h1v1h-1zM159 299h1v1h-1zM164 299h1v1h-1zM169 299h1v1h-1zM174 299h1v1h-1zM179 299h1v1h-1zM184 299h1v1h-1zM189 299h1v1h-1zM194 299h1v1h-1zM199 299h1v1h-1zM204 299h1v1h-1zM209 299h1v1h-1zM214 299h1v1h-1zM219 299h1v1h-1zM224 299h1v1h-1zM229 299h1v1h-1zM234 299h1v1h-1zM239 299h1v1h-1zM244 299h1v1h-1zM249 299h1v1h-1zM254 299h1v1h-1zM259 299h1v1h-1zM264 299h1v1h-1zM269 299h1v1h-1zM274 299h1v1h-1zM279 299h1v1h-1zM284 299h1v1h-1zM289 299h1v1h-1zM294 299h1v1h-1zM299 299h1v1h-1zM304 299h1v1h-1zM309 299h1v1h-1zM314 299h1v1h-1zM319 299h1v1h-1zM324 299h1v1h-1zM329 299h1v1h-1zM334 299h1v1h-1zM339 299h1v1h-1zM344 299h1v1h-1zM349 299h1v1h-1zM354 299h1v1h-1zM359 299h1v1h-1zM364 299h1v1h-1zM369 299h1v1h-1zM374 299h1v1h-1zM379 299h1v1h-1zM384 299h1v1h-1zM389 299h1v1h-1zM394 299h1v1h-1zM399 299h1v1h-1zM404 299h1v1h-1zM409 299h1v1h-1zM414 299h1v1h-1zM419 299h1v1h-1zM424 299h1v1h-1zM429 299h1v1h-1zM434 299h1v1h-1zM439 299h1v1h-1zM444 299h1v1h-1zM449 299h1v1h-1zM454 299h1v1h-1zM459 299h1v1h-1zM464 299h1v1h-1zM469 299h1v1h-1zM474 299h1v1h-1zM479 299h1v1h-1zM484 299h1v1h-1zM489 299h1v1h-1zM494 299h1v1h-1zM499 299h1v1h-1zM504 299h1v1h-1zM509 299h1v1h-1zM514 299h1v1h-1zM519 299h1v1h-1zM524 299h1v1h-1zM529 299h1v1h-1zM534 299h1v1h-1zM539 299h1v1h-1zM544 299h1v1h-1zM549 299h1v1h-1zM554 299h1v1h-1zM559 299h1v1h-1zM564 299h1v1h-1zM569 299h1v1h-1zM574 299h1v1h-1zM579 299h1v1h-1zM584 299h1v1h-1zM589 299h1v1h-1zM594 299h1v1h-1zM599 299h1v1h-1zM604 299h1v1h-1zM609 299h1v1h-1zM614 299h1v1h-1zM619 299h1v1h-1zM624 299h1v1h-1zM629 299h1v1h-1zM634 299h1v1h-1zM639 299h1v1h-1zM644 299h1v1h-1zM649 299h1v1h-1zM654 299h1v1h-1zM659 299h1v1h-1zM664 299h1v1h-1zM669 299h1v1h-1zM674 299h1v1h-1zM679 299h1v1h-1zM684 299h1v1h-1zM689 299h1v1h-1zM694 299h1v1h-1zM699 299h1v1h-1zM704 299h1v1h-1zM709 299h1v1h-1zM714 299h1v1h-1zM719 299h1v1h-1zM724 299h1v1h-1zM4 349h1v1h-1zM9 349h1v1h-1zM14 349h1v1h-1zM19 349h1v1h-1zM24 349h1v1h-1zM29 349h1v1h-1zM34 349h1v1h-1zM39 349h1v1h-1zM44 349h1v1h-1zM49 349h1v1h-1zM54 349h1v1h-1zM59 349h1v1h-1zM64 349h1v1h-1zM69 349h1v1h-1zM74 349h1v1h-1zM79 349h1v1h-1zM84 349h1v1h-1zM89 349h1v1h-1zM94 349h1v1h-1zM99 349h1v1h-1zM104 349h1v1h-1zM109 349h1v1h-1zM114 349h1v1h-1zM119 349h1v1h-1zM124 349h1v1h-1zM129 349h1v1h-1zM134 349h1v1h-1zM139 349h1v1h-1zM144 349h1v1h-1zM149 349h1v1h-1zM154 349h1v1h-1zM159 349h1v1h-1zM164 349h1v1h-1zM169 349h1v1h-1zM174 349h1v1h-1zM179 349h1v1h-1zM184 349h1v1h-1zM189 349h1v1h-1zM194 349h1v1h-1zM199 349h1v1h-1zM204 349h1v1h-1zM209 349h1v1h-1zM214 349h1v1h-1zM219 349h1v1h-1zM224 349h1v1h-1zM229 349h1v1h-1zM234 349h1v1h-1zM239 349h1v1h-1zM244 349h1v1h-1zM249 349h1v1h-1zM254 349h1v1h-1zM259 349h1v1h-1zM264 349h1v1h-1zM269 349h1v1h-1zM274 349h1v1h-1zM279 349h1v1h-1zM284 349h1v1h-1zM289 349h1v1h-1zM294 349h1v1h-1zM299 349h1v1h-1zM304 349h1v1h-1zM309 349h1v1h-1zM314 349h1v1h-1zM319 349h1v1h-1zM324 349h1v1h-1zM329 349h1v1h-1zM334 349h1v1h-1zM339 349h1v1h-1zM344 349h1v1h-1zM349 349h1v1h-1zM354 349h1v1h-1zM359 349h1v1h-1zM364 349h1v1h-1zM369 349h1v1h-1zM374 349h1v1h-1zM379 349h1v1h-1zM384 349h1v1h-1zM389 349h1v1h-1zM394 349h1v1h-1zM399 349h1v1h-1zM404 349h1v1h-1zM409 349h1v1h-1zM414 349h1v1h-1zM419 349h1v1h-1zM424 349h1v1h-1zM429 349h1v1h-1zM434 349h1v1h-1zM439 349h1v1h-1zM444 349h1v1h-1zM449 349h1v1h-1zM454 349h1v1h-1zM459 349h1v1h-1zM464 349h1v1h-1zM469 349h1v1h-1zM474 349h1v1h-1zM479 349h1v1h-1zM484 349h1v1h-1zM489 349h1v1h-1zM494 349h1v1h-1zM499 349h1v1h-1zM504 349h1v1h-1zM509 349h1v1h-1zM514 349h1v1h-1zM519 349h1v1h-1zM524 349h1v1h-1zM529 349h1v1h-1zM534 349h1v1h-1zM539 349h1v1h-1zM544 349h1v1h-1zM549 349h1v1h-1zM554 349h1v1h-1zM559 349h1v1h-1zM564 349h1v1h-1zM569 349h1v1h-1zM574 349h1v1h-1zM579 349h1v1h-1zM584 349h1v1h-1zM589 349h1v1h-1zM594 349h1v1h-1zM599 349h1v1h-1zM604 349h1v1h-1zM609 349h1v1h-1zM614 349h1v1h-1zM619 349h1v1h-1zM624 349h1v1h-1zM629 349h1v1h-1zM634 349h1v1h-1zM639 349h1v1h-1zM644 349h1v1h-1zM649 349h1v1h-1zM654 349h1v1h-1zM659 349h1v1h-1zM664 349h1v1h-1zM669 349h1v1h-1zM674 349h1v1h-1zM679 349h1v1h-1zM684 349h1v1h-1zM689 349h1v1h-1zM694 349h1v1h-1zM699 349h1v1h-1zM704 349h1v1h-1zM709 349h1v1h-1zM714 349h1v1h-1zM719 349h1v1h-1zM724 349h1v1h-1zM4 399h1v1h-1zM9 399h1v1h-1zM14 399h1v1h-1zM19 399h1v1h-1zM24 399h1v1h-1zM29 399h1v1h-1zM34 399h1v1h-1zM39 399h1v1h-1zM44 399h1v1h-1zM49 399h1v1h-1zM54 399h1v1h-1zM59 399h1v1h-1zM64 399h1v1h-1zM69 399h1v1h-1zM74 399h1v1h-1zM79 399h1v1h-1zM84 399h1v1h-1zM89 399h1v1h-1zM94 399h1v1h-1zM99 399h1v1h-1zM104 399h1v1h-1zM109 399h1v1h-1zM114 399h1v1h-1zM119 399h1v1h-1zM124 399h1v1h-1zM129 399h1v1h-1zM134 399h1v1h-1zM139 399h1v1h-1zM144 399h1v1h-1zM149 399h1v1h-1zM154 399h1v1h-1zM159 399h1v1h-1zM164 399h1v1h-1zM169 399h1v1h-1zM174 399h1v1h-1zM179 399h1v1h-1zM184 399h1v1h-1zM189 399h1v1h-1zM194 399h1v1h-1zM199 399h1v1h-1zM204 399h1v1h-1zM209 399h1v1h-1zM214 399h1v1h-1zM219 399h1v1h-1zM224 399h1v1h-1zM229 399h1v1h-1zM234 399h1v1h-1zM239 399h1v1h-1zM244 399h1v1h-1zM249 399h1v1h-1zM254 399h1v1h-1zM259 399h1v1h-1zM264 399h1v1h-1zM269 399h1v1h-1zM274 399h1v1h-1zM279 399h1v1h-1zM284 399h1v1h-1zM289 399h1v1h-1zM294 399h1v1h-1zM299 399h1v1h-1zM304 399h1v1h-1zM309 399h1v1h-1zM314 399h1v1h-1zM319 399h1v1h-1zM324 399h1v1h-1zM329 399h1v1h-1zM334 399h1v1h-1zM339 399h1v1h-1zM344 399h1v1h-1zM349 399h1v1h-1zM354 399h1v1h-1zM359 399h1v1h-1zM364 399h1v1h-1zM369 399h1v1h-1zM374 399h1v1h-1zM379 399h1v1h-1zM384 399h1v1h-1zM389 399h1v1h-1zM394 399h1v1h-1zM399 399h1v1h-1zM404 399h1v1h-1zM409 399h1v1h-1zM414 399h1v1h-1zM419 399h1v1h-1zM424 399h1v1h-1zM429 399h1v1h-1zM434 399h1v1h-1zM439 399h1v1h-1zM444 399h1v1h-1zM449 399h1v1h-1zM454 399h1v1h-1zM459 399h1v1h-1zM464 399h1v1h-1zM469 399h1v1h-1zM474 399h1v1h-1zM479 399h1v1h-1zM484 399h1v1h-1zM489 399h1v1h-1zM494 399h1v1h-1zM499 399h1v1h-1zM504 399h1v1h-1zM509 399h1v1h-1zM514 399h1v1h-1zM519 399h1v1h-1zM524 399h1v1h-1zM529 399h1v1h-1zM534 399h1v1h-1zM539 399h1v1h-1zM544 399h1v1h-1zM549 399h1v1h-1zM554 399h1v1h-1zM559 399h1v1h-1zM564 399h1v1h-1zM569 399h1v1h-1zM574 399h1v1h-1zM579 399h1v1h-1zM584 399h1v1h-1zM589 399h1v1h-1zM594 399h1v1h-1zM599 399h1v1h-1zM604 399h1v1h-1zM609 399h1v1h-1zM614 399h1v1h-1zM619 399h1v1h-1zM624 399h1v1h-1zM629 399h1v1h-1zM634 399h1v1h-1zM639 399h1v1h-1zM644 399h1v1h-1zM649 399h1v1h-1zM654 399h1v1h-1zM659 399h1v1h-1zM664 399h1v1h-1zM669 399h1v1h-1zM674 399h1v1h-1zM679 399h1v1h-1zM684 399h1v1h-1zM689 399h1v1h-1zM694 399h1v1h-1zM699 399h1v1h-1zM704 399h1v1h-1zM709 399h1v1h-1zM714 399h1v1h-1zM719 399h1v1h-1zM724 399h1v1h-1z"/><rect x="364" y="47" width="1" height="402" fill="#3d393d"/><rect x="3" y="249" width="723" height="1" fill="#3d393d"/><path fill="#3d393d" d="M362 49h5v1h-5zM362 54h5v1h-5zM362 59h5v1h-5zM362 64h5v1h-5zM362 69h5v1h-5zM362 74h5v1h-5zM362 79h5v1h-5zM362 84h5v1h-5zM362 89h5v1h-5zM362 94h5v1h-5zM362 99h5v1h-5zM362 104h5v1h-5zM362 109h5v1h-5zM362 114h5v1h-5zM362 119h5v1h-5zM362 124h5v1h-5zM362 129h5v1h-5zM362 134h5v1h-5zM362 139h5v1h-5zM362 144h5v1h-5zM362 149h5v1h-5zM362 154h5v1h-5zM362 159h5v1h-5zM362 164h5v1h-5zM362 169h5v1h-5zM362 174h5v1h-5zM362 179h5v1h-5zM362 184h5v1h-5zM362 189h5v1h-5zM362 194h5v1h-5zM362 199h5v1h-5zM362 204h5v1h-5zM362 209h5v1h-5zM362 214h5v1h-5zM362 219h5v1h-5zM362 224h5v1h-5zM362 229h5v1h-5zM362 234h5v1h-5zM362 239h5v1h-5zM362 244h5v1h-5zM362 249h5v1h-5zM362 254h5v1h-5zM362 259h5v1h-5zM362 264h5v1h-5zM362 269h5v1h-5zM362 274h5v1h-5zM362 279h5v1h-5zM362 284h5v1h-5zM362 289h5v1h-5zM362 294h5v1h-5zM362 299h5v1h-5zM362 304h5v1h-5zM362 309h5v1h-5zM362 314h5v1h-5zM362 319h5v1h-5zM362 324h5v1h-5zM362 329h5v1h-5zM362 334h5v1h-5zM362 339h5v1h-5zM362 344h5v1h-5zM362 349h5v1h-5zM362 354h5v1h-5zM362 359h5v1h-5zM362 364h5v1h-5zM362 369h5v1h-5zM362 374h5v1h-5zM362 379h5v1h-5zM362 384h5v1h-5zM362 389h5v1h-5zM362 394h5v1h-5zM362 399h5v1h-5zM362 404h5v1h-5zM362 409h5v1h-5zM362 414h5v1h-5zM362 419h5v1h-5zM362 424h5v1h-5zM362 429h5v1h-5zM362 434h5v1h-5zM362 439h5v1h-5zM362 444h5v1h-5zM4 247h1v5h-1zM9 247h1v5h-1zM14 247h1v5h-1zM19 247h1v5h-1zM24 247h1v5h-1zM29 247h1v5h-1zM34 247h1v5h-1zM39 247h1v5h-1zM44 247h1v5h-1zM49 247h1v5h-1zM54 247h1v5h-1zM59 247h1v5h-1zM64 247h1v5h-1zM69 247h1v5h-1zM74 247h1v5h-1zM79 247h1v5h-1zM84 247h1v5h-1zM89 247h1v5h-1zM94 247h1v5h-1zM99 247h1v5h-1zM104 247h1v5h-1zM109 247h1v5h-1zM114 247h1v5h-1zM119 247h1v5h-1zM124 247h1v5h-1zM129 247h1v5h-1zM134 247h1v5h-1zM139 247h1v5h-1zM144 247h1v5h-1zM149 247h1v5h-1zM154 247h1v5h-1zM159 247h1v5h-1zM164 247h1v5h-1zM169 247h1v5h-1zM174 247h1v5h-1zM179 247h1v5h-1zM184 247h1v5h-1zM189 247h1v5h-1zM194 247h1v5h-1zM199 247h1v5h-1zM204 247h1v5h-1zM209 247h1v5h-1zM214 247h1v5h-1zM219 247h1v5h-1zM224 247h1v5h-1zM229 247h1v5h-1zM234 247h1v5h-1zM239 247h1v5h-1zM244 247h1v5h-1zM249 247h1v5h-1zM254 247h1v5h-1zM259 247h1v5h-1zM264 247h1v5h-1zM269 247h1v5h-1zM274 247h1v5h-1zM279 247h1v5h-1zM284 247h1v5h-1zM289 247h1v5h-1zM294 247h1v5h-1zM299 247h1v5h-1zM304 247h1v5h-1zM309 247h1v5h-1zM314 247h1v5h-1zM319 247h1v5h-1zM324 247h1v5h-1zM329 247h1v5h-1zM334 247h1v5h-1zM339 247h1v5h-1zM344 247h1v5h-1zM349 247h1v5h-1zM354 247h1v5h-1zM359 247h1v5h-1zM364 247h1v5h-1zM369 247h1v5h-1zM374 247h1v5h-1zM379 247h1v5h-1zM384 247h1v5h-1zM389 247h1v5h-1zM394 247h1v5h-1zM399 247h1v5h-1zM404 247h1v5h-1zM409 247h1v5h-1zM414 247h1v5h-1zM419 247h1v5h-1zM424 247h1v5h-1zM429 247h1v5h-1zM434 247h1v5h-1zM439 247h1v5h-1zM444 247h1v5h-1zM449 247h1v5h-1zM454 247h1v5h-1zM459 247h1v5h-1zM464 247h1v5h-1zM469 247h1v5h-1zM474 247h1v5h-1zM479 247h1v5h-1zM484 247h1v5h-1zM489 247h1v5h-1zM494 247h1v5h-1zM499 247h1v5h-1zM504 247h1v5h-1zM509 247h1v5h-1zM514 247h1v5h-1zM519 247h1v5h-1zM524 247h1v5h-1zM529 247h1v5h-1zM534 247h1v5h-1zM539 247h1v5h-1zM544 247h1v5h-1zM549 247h1v5h-1zM554 247h1v5h-1zM559 247h1v5h-1zM564 247h1v5h-1zM569 247h1v5h-1zM574 247h1v5h-1zM579 247h1v5h-1zM584 247h1v5h-1zM589 247h1v5h-1zM594 247h1v5h-1zM599 247h1v5h-1zM604 247h1v5h-1zM609 247h1v5h-1zM614 247h1v5h-1zM619 247h1v5h-1zM624 247h1v5h-1zM629 247h1v5h-1zM634 247h1v5h-1zM639 247h1v5h-1zM644 247h1v5h-1zM649 247h1v5h-1zM654 247h1v5h-1zM659 247h1v5h-1zM664 247h1v5h-1zM669 247h1v5h-1zM674 247h1v5h-1zM679 247h1v5h-1zM684 247h1v5h-1zM689 247h1v5h-1zM694 247h1v5h-1zM699 247h1v5h-1zM704 247h1v5h-1zM709 247h1v5h-1zM714 247h1v5h-1zM719 247h1v5h-1zM724 247h1v5h-1z"/></g>
<path d="M3 250 H44.5 V157 H58.5 l1.7 2 l1.7 -1.5 l1.2 1.3 l1.2 -1.3 l1.2 1.3 l1.2 -1.3 l1 1.3 l1 -1.8 H80 l1.5 2 l1.5 -1.5 l1.5 1.5 l1.5 -2 H90 l1.7 2 l1.7 -2 l1.3 0 l1.6 2 l1.7 -2 H106 l1.5 2 l1.5 -1.5 l1.5 1.5 l1 -2 H123.5 V243 H125.5 l1 2 l1 -2 H132 l1 1 H134 l1.5 2 l1.5 -3 l1.5 2 H143.5 l1.2 -2 l1.3 2 V248 H164.5 V157 H169.5 V244 l1 2.5 l1.5 1.5 H187.5 V158 L188.5 157 H191.5 L192.5 158 V244 l1 2.5 l1.5 1.5 H198.5 V159 L200.5 157 H204.5 V248 H221.5 V158 L222.5 157 H225.5 L226.5 158 V244 l1 2.5 l1.5 1.5 H233.5 V156.6 L235.0 159 L236.5 157 H238.5 V245 l1.5 2.5 l1.5 -2 l1.5 2 l1 .5 H244.5 V156.6 L246.0 158 L247.0 159 L248.0 158 L249.5 156.6 V236 l1 5 l0.7 3 l1.3 4 H267.5 V156.6 L269.0 159 L270.5 157 H272.5 V244 l1 2.5 l1.5 1.5 H278.5 V156.6 L280.5 158 L281.5 159 L282.5 158 L284.5 156.6 V246 h4 l1.2 1.8 l1.3 -2 l1.3 2 l1.2 -1.5 l1 1.7 H301.5 V159 L303.5 157 H306.5 V245 l1.5 2.5 l1.5 -2 l1.5 2 l1 .5 H313.5 V158 L314.5 157 H317.5 L318.5 158 V244 l1 2.5 l1.5 1.5 H324.5 V158 L325.5 157 H329.5 L330.5 158 V244 l1 2.5 l1.5 1.5 H336.5 V157 H341.5 V244 l1 1.5 h2 l1.5 2.5 H352 l1 -2.5 l1 2.5 H359.5 V156.6 L361.0 159 L362.5 157 H364.5 V244 l1 2.5 l1.5 1.5 H370.5 V159 L372.5 157 H375.5 V246 h4.5 l1.5 2 H382.5 V157 H384.5 L386.0 159 L387.5 156.6 V246 h3 l1.5 1.8 l1.5 -2 l1.5 2 l1.5 -2 l1.5 2.2 H405.5 V156.6 L407.0 158 L408.0 159 L409.0 158 L410.5 156.6 V248 H427.5 V159 L429.5 157 H432.5 V236 l1 5 l0.7 3 l1.3 4 H439.5 V156.6 L441.0 158 L442.0 159 L443.0 158 L444.5 156.6 V244 l1 2.5 l1.5 1.5 h2.5 l1 -2 l1 2 H462.5 V156.6 L464.0 159 L465.5 157 H467.5 V248 H473.5 V156.6 L475.0 159 L476.5 157 H479.5 V248 H485.5 V157 H490.5 V248 H496.5 V157 H502.5 V246 h3 l1.5 1.8 l1.5 -2 l1.5 2 l1.5 -2 l1.5 2.2 H519.5 V158 L520.5 157 H523.5 L524.5 158 V244 l1 2.5 l1.5 1.5 H531.5 V157 H536.5 V244 l1 2.5 l1.5 1.5 H553.5 V156.6 L555.0 159 L556.5 157 H559.5 V248 H565.5 V156.6 L567.0 158 L568.0 159 L569.0 158 L570.5 156.6 V244 l1 2.5 l1.5 1.5 H588.5 V156.6 L590.0 158 L591.0 159 L592.0 158 L593.5 156.6 V244 l1 2.5 l1.5 1.5 H599.5 V159 L601.5 157 H605.5 V248 H611.5 V156.6 L613.0 158 L614.0 159 L615.0 158 L616.5 156.6 V246 h2 l1.5 1.8 l1.5 -2 l1.5 0 l1.5 2 l1.5 -2 l1.5 2 l1.5 -2 l1 2.2 H634.5 V156.6 L636.0 158 L637.0 159 L638.0 158 L639.5 156.6 V248 H656.5 V157 H659.0 l1 -1.3 l1 1.3 H662.5 V248 H679.5 V156.6 L681.0 158 L682.0 159 L683.0 158 L684.5 156.6 V248 H702.5 V156.6 L704.0 158 L705.0 159 L706.0 158 L707.5 156.6 V248 H726" fill="none" stroke="#ffff00" stroke-width="1.15" stroke-linejoin="miter" stroke-miterlimit="2" transform="translate(0,-0.45)"/>
<path d="M3 250 H44.5 V157 H58.5 l1.7 2 l1.7 -1.5 l1.2 1.3 l1.2 -1.3 l1.2 1.3 l1.2 -1.3 l1 1.3 l1 -1.8 H80 l1.5 2 l1.5 -1.5 l1.5 1.5 l1.5 -2 H90 l1.7 2 l1.7 -2 l1.3 0 l1.6 2 l1.7 -2 H106 l1.5 2 l1.5 -1.5 l1.5 1.5 l1 -2 H123.5 V243 H125.5 l1 2 l1 -2 H132 l1 1 H134 l1.5 2 l1.5 -3 l1.5 2 H143.5 l1.2 -2 l1.3 2 V248 H164.5 V157 H169.5 V244 l1 2.5 l1.5 1.5 H187.5 V158 L188.5 157 H191.5 L192.5 158 V244 l1 2.5 l1.5 1.5 H198.5 V159 L200.5 157 H204.5 V248 H221.5 V158 L222.5 157 H225.5 L226.5 158 V244 l1 2.5 l1.5 1.5 H233.5 V156.6 L235.0 159 L236.5 157 H238.5 V245 l1.5 2.5 l1.5 -2 l1.5 2 l1 .5 H244.5 V156.6 L246.0 158 L247.0 159 L248.0 158 L249.5 156.6 V236 l1 5 l0.7 3 l1.3 4 H267.5 V156.6 L269.0 159 L270.5 157 H272.5 V244 l1 2.5 l1.5 1.5 H278.5 V156.6 L280.5 158 L281.5 159 L282.5 158 L284.5 156.6 V246 h4 l1.2 1.8 l1.3 -2 l1.3 2 l1.2 -1.5 l1 1.7 H301.5 V159 L303.5 157 H306.5 V245 l1.5 2.5 l1.5 -2 l1.5 2 l1 .5 H313.5 V158 L314.5 157 H317.5 L318.5 158 V244 l1 2.5 l1.5 1.5 H324.5 V158 L325.5 157 H329.5 L330.5 158 V244 l1 2.5 l1.5 1.5 H336.5 V157 H341.5 V244 l1 1.5 h2 l1.5 2.5 H352 l1 -2.5 l1 2.5 H359.5 V156.6 L361.0 159 L362.5 157 H364.5 V244 l1 2.5 l1.5 1.5 H370.5 V159 L372.5 157 H375.5 V246 h4.5 l1.5 2 H382.5 V157 H384.5 L386.0 159 L387.5 156.6 V246 h3 l1.5 1.8 l1.5 -2 l1.5 2 l1.5 -2 l1.5 2.2 H405.5 V156.6 L407.0 158 L408.0 159 L409.0 158 L410.5 156.6 V248 H427.5 V159 L429.5 157 H432.5 V236 l1 5 l0.7 3 l1.3 4 H439.5 V156.6 L441.0 158 L442.0 159 L443.0 158 L444.5 156.6 V244 l1 2.5 l1.5 1.5 h2.5 l1 -2 l1 2 H462.5 V156.6 L464.0 159 L465.5 157 H467.5 V248 H473.5 V156.6 L475.0 159 L476.5 157 H479.5 V248 H485.5 V157 H490.5 V248 H496.5 V157 H502.5 V246 h3 l1.5 1.8 l1.5 -2 l1.5 2 l1.5 -2 l1.5 2.2 H519.5 V158 L520.5 157 H523.5 L524.5 158 V244 l1 2.5 l1.5 1.5 H531.5 V157 H536.5 V244 l1 2.5 l1.5 1.5 H553.5 V156.6 L555.0 159 L556.5 157 H559.5 V248 H565.5 V156.6 L567.0 158 L568.0 159 L569.0 158 L570.5 156.6 V244 l1 2.5 l1.5 1.5 H588.5 V156.6 L590.0 158 L591.0 159 L592.0 158 L593.5 156.6 V244 l1 2.5 l1.5 1.5 H599.5 V159 L601.5 157 H605.5 V248 H611.5 V156.6 L613.0 158 L614.0 159 L615.0 158 L616.5 156.6 V246 h2 l1.5 1.8 l1.5 -2 l1.5 0 l1.5 2 l1.5 -2 l1.5 2 l1.5 -2 l1 2.2 H634.5 V156.6 L636.0 158 L637.0 159 L638.0 158 L639.5 156.6 V248 H656.5 V157 H659.0 l1 -1.3 l1 1.3 H662.5 V248 H679.5 V156.6 L681.0 158 L682.0 159 L683.0 158 L684.5 156.6 V248 H702.5 V156.6 L704.0 158 L705.0 159 L706.0 158 L707.5 156.6 V248 H726" fill="none" stroke="#ffff00" stroke-width="1.15" stroke-linejoin="miter" stroke-miterlimit="2" transform="translate(0,0.45)"/>
<path shape-rendering="crispEdges" fill="#00bc1c" d="M44 48h1v4h-1zM44 54h1v4h-1zM44 60h1v4h-1zM44 66h1v4h-1zM44 72h1v4h-1zM44 78h1v4h-1zM44 84h1v4h-1zM44 90h1v4h-1zM44 96h1v4h-1zM44 102h1v4h-1zM44 108h1v4h-1zM44 114h1v4h-1zM44 120h1v4h-1zM44 126h1v4h-1zM44 132h1v4h-1zM44 138h1v4h-1zM44 144h1v4h-1zM44 150h1v4h-1zM44 156h1v4h-1zM44 162h1v4h-1zM44 168h1v4h-1zM44 174h1v4h-1zM44 180h1v4h-1zM44 186h1v4h-1zM44 192h1v4h-1zM44 198h1v4h-1zM44 204h1v4h-1zM44 210h1v4h-1zM44 216h1v4h-1zM44 222h1v4h-1zM44 228h1v4h-1zM44 234h1v4h-1zM44 240h1v4h-1zM44 246h1v4h-1zM44 252h1v4h-1zM44 258h1v4h-1zM44 264h1v4h-1zM44 270h1v4h-1zM44 276h1v4h-1zM44 282h1v4h-1zM44 288h1v4h-1zM44 294h1v4h-1zM44 300h1v4h-1zM44 306h1v4h-1zM44 312h1v4h-1zM44 318h1v4h-1zM44 324h1v4h-1zM44 330h1v4h-1zM44 336h1v4h-1zM44 342h1v4h-1zM44 348h1v4h-1zM44 354h1v4h-1zM44 360h1v4h-1zM44 366h1v4h-1zM44 372h1v4h-1zM44 378h1v4h-1zM44 384h1v4h-1zM44 390h1v4h-1zM44 396h1v4h-1zM44 402h1v4h-1zM44 408h1v4h-1zM44 414h1v4h-1zM44 420h1v4h-1zM44 426h1v4h-1zM44 432h1v4h-1zM44 438h1v4h-1zM44 444h1v4h-1zM708 48h1v4h-1zM708 54h1v4h-1zM708 60h1v4h-1zM708 66h1v4h-1zM708 72h1v4h-1zM708 78h1v4h-1zM708 84h1v4h-1zM708 90h1v4h-1zM708 96h1v4h-1zM708 102h1v4h-1zM708 108h1v4h-1zM708 114h1v4h-1zM708 120h1v4h-1zM708 126h1v4h-1zM708 132h1v4h-1zM708 138h1v4h-1zM708 144h1v4h-1zM708 150h1v4h-1zM708 156h1v4h-1zM708 162h1v4h-1zM708 168h1v4h-1zM708 174h1v4h-1zM708 180h1v4h-1zM708 186h1v4h-1zM708 192h1v4h-1zM708 198h1v4h-1zM708 204h1v4h-1zM708 210h1v4h-1zM708 216h1v4h-1zM708 222h1v4h-1zM708 228h1v4h-1zM708 234h1v4h-1zM708 240h1v4h-1zM708 246h1v4h-1zM708 252h1v4h-1zM708 258h1v4h-1zM708 264h1v4h-1zM708 270h1v4h-1zM708 276h1v4h-1zM708 282h1v4h-1zM708 288h1v4h-1zM708 294h1v4h-1zM708 300h1v4h-1zM708 306h1v4h-1zM708 312h1v4h-1zM708 318h1v4h-1zM708 324h1v4h-1zM708 330h1v4h-1zM708 336h1v4h-1zM708 342h1v4h-1zM708 348h1v4h-1zM708 354h1v4h-1zM708 360h1v4h-1zM708 366h1v4h-1zM708 372h1v4h-1zM708 378h1v4h-1zM708 384h1v4h-1zM708 390h1v4h-1zM708 396h1v4h-1zM708 402h1v4h-1zM708 408h1v4h-1zM708 414h1v4h-1zM708 420h1v4h-1zM708 426h1v4h-1zM708 432h1v4h-1zM708 438h1v4h-1zM708 444h1v4h-1z"/>
<path d="M2 151H15L22 158.5L15 166H2z" fill="#ffff00"/>
<text class="m" x="10" y="163" font-size="14.5" font-weight="bold" text-anchor="middle" fill="#000">1</text>
<path d="M727 227H714L707 234.5L714 242H727z" fill="#00ff00"/>
<text x="720.5" y="240" font-size="14" font-weight="bold" text-anchor="middle" fill="#000">T</text>
<rect x="5" y="49" width="98" height="34" rx="3" fill="#444"/>
<text class="m" x="10" y="62.5" font-size="13.33" font-weight="bold" fill="#fff" xml:space="preserve">T = 66.4mS</text>
<text class="m" x="10" y="78.5" font-size="13.33" font-weight="bold" fill="#fff" xml:space="preserve">F = 15.</text>
<text class="m" x="66.4" y="78.5" font-size="13.33" font-weight="bold" fill="#fff" textLength="7" lengthAdjust="spacingAndGlyphs">O</text>
<text class="m" x="74" y="78.5" font-size="13.33" font-weight="bold" fill="#fff">Hz</text>
<path d="M96 48H109V57L102.5 64L96 57z" fill="#00ff00"/>
<rect x="0" y="0" width="80" height="40" fill="#000080" />
<path fill="#fff" shape-rendering="crispEdges" d="M4 12h8v8h-8zM13 12h8v8h-8zM4 21h8v8h-8zM13 21h8v8h-8z"/>
<text x="25.8" y="26" font-size="17" fill="#fff" stroke="#fff" stroke-width="0.45" textLength="49.2" lengthAdjust="spacingAndGlyphs">MENU</text>
<rect x="103" y="12" width="34" height="18" fill="#ff0000" />
<text x="104.8" y="27" font-size="15" fill="#000" stroke="#000" stroke-width="0.5" textLength="31.8" lengthAdjust="spacingAndGlyphs">STOP</text>
<rect x="161" y="5" width="31" height="36" fill="#ffff00" />
<text x="166" y="27" font-size="11.5" font-weight="bold" fill="#000" stroke="#000" stroke-width="0.25" textLength="20.5" lengthAdjust="spacingAndGlyphs">CH1</text>
<text x="199" y="19" font-size="11.5" font-weight="bold" fill="#fff" textLength="14.5" lengthAdjust="spacingAndGlyphs">DC</text>
<text x="225" y="19" font-size="11.5" font-weight="bold" fill="#fff" textLength="12.5" lengthAdjust="spacingAndGlyphs">1X</text>
<text x="199" y="35" font-size="11.5" font-weight="bold" fill="#fff" textLength="46" lengthAdjust="spacingAndGlyphs">2.5V/div</text>
<rect x="288" y="5" width="31" height="36" fill="#464646" />
<text x="293" y="27" font-size="11.5" font-weight="bold" fill="#111" stroke="#111" stroke-width="0.3" textLength="21" lengthAdjust="spacingAndGlyphs">CH2</text>
<text x="326" y="19" font-size="11.5" font-weight="bold" fill="#fff" textLength="14.5" lengthAdjust="spacingAndGlyphs">AC</text>
<text x="352" y="19" font-size="11.5" font-weight="bold" fill="#fff" textLength="12.5" lengthAdjust="spacingAndGlyphs">1X</text>
<text x="326" y="35" font-size="11.5" font-weight="bold" fill="#fff" textLength="36" lengthAdjust="spacingAndGlyphs">5V/div</text>
<text class="m" x="402" y="28" font-size="15" fill="#fff" textLength="56" lengthAdjust="spacingAndGlyphs">5mS/div</text>
<rect x="492" y="5" width="40" height="36" fill="#000066" />
<text x="495" y="19" font-size="15" fill="#fff" stroke="#fff" stroke-width="0.3" textLength="35" lengthAdjust="spacingAndGlyphs">move</text>
<text x="497" y="34.5" font-size="15" fill="#fff" stroke="#fff" stroke-width="0.3" textLength="30" lengthAdjust="spacingAndGlyphs">fast</text>
<rect x="570" y="5" width="31" height="36" fill="#00ff00" />
<text x="586" y="28" font-size="14" fill="#000" stroke="#000" stroke-width="0.3" text-anchor="middle">T</text>
<text x="606" y="18" font-size="11.5" font-weight="bold" fill="#fff" textLength="26" lengthAdjust="spacingAndGlyphs">Auto</text>
<rect x="605" y="25" width="29" height="16" fill="#c8c800" />
<text x="609" y="37" font-size="11.5" font-weight="bold" fill="#111" stroke="#111" stroke-width="0.35" textLength="20.5" lengthAdjust="spacingAndGlyphs">CH1</text>
<path shape-rendering="crispEdges" fill="#fff" d="M642 27h1v12h-1zM642 27h4v1h-4zM639 38h4v1h-4zM640 33h5v1h-5zM641 32h3v1h-3z"/>
<path fill="#fff" shape-rendering="crispEdges" d="M704 5h22v13h-22zM702 9h2v5h-2z"/>
<rect x="720" y="6" width="5" height="11" fill="#00b000" shape-rendering="crispEdges"/>
<rect x="739.5" y="5.5" width="51" height="50" rx="4" fill="#404040" stroke="#454545"/>
<text x="748.75" y="34.5" font-size="14" fill="#fff" stroke="#fff" stroke-width="0.25" textLength="31.75" lengthAdjust="spacingAndGlyphs">CTRL</text>
<rect x="739.5" y="65.5" width="51" height="50" rx="4" fill="#000" stroke="#262626"/>
<text x="747.5" y="88.0" font-size="14" fill="#fff" stroke="#fff" stroke-width="0.25" textLength="33.5" lengthAdjust="spacingAndGlyphs">RUN/</text>
<text x="747.5" y="103.0" font-size="14" fill="#fff" stroke="#fff" stroke-width="0.25" textLength="34.5" lengthAdjust="spacingAndGlyphs">STOP</text>
<rect x="739.5" y="125.5" width="51" height="50" rx="4" fill="#000" stroke="#262626"/>
<text x="748" y="148.0" font-size="14" fill="#fff" stroke="#fff" stroke-width="0.25" textLength="34" lengthAdjust="spacingAndGlyphs">AUTO</text>
<text x="752.5" y="163.0" font-size="14" fill="#fff" stroke="#fff" stroke-width="0.25" textLength="23.5" lengthAdjust="spacingAndGlyphs">SET</text>
<rect x="739.5" y="185.5" width="51" height="50" rx="4" fill="#000" stroke="#262626"/>
<text x="748" y="208.0" font-size="14" fill="#fff" stroke="#fff" stroke-width="0.25" textLength="8.5" lengthAdjust="spacingAndGlyphs">T</text>
<text x="767.5" y="208.0" font-size="14" fill="#fff" stroke="#fff" stroke-width="0.25" textLength="16.0" lengthAdjust="spacingAndGlyphs">CU</text>
<text x="747.5" y="223.0" font-size="14" fill="#fff" stroke="#fff" stroke-width="0.25" textLength="36.0" lengthAdjust="spacingAndGlyphs">RSOR</text>
<rect x="739.5" y="245.5" width="51" height="50" rx="4" fill="#000" stroke="#262626"/>
<text x="747.5" y="268.0" font-size="14" fill="#fff" stroke="#fff" stroke-width="0.25" textLength="9.5" lengthAdjust="spacingAndGlyphs">V</text>
<text x="767.5" y="268.0" font-size="14" fill="#fff" stroke="#fff" stroke-width="0.25" textLength="16.0" lengthAdjust="spacingAndGlyphs">CU</text>
<text x="747.5" y="283.0" font-size="14" fill="#fff" stroke="#fff" stroke-width="0.25" textLength="36.0" lengthAdjust="spacingAndGlyphs">RSOR</text>
<rect x="739.5" y="305.5" width="51" height="50" rx="4" fill="#000" stroke="#262626"/>
<text x="747.5" y="328.0" font-size="14" fill="#fff" stroke="#fff" stroke-width="0.25" textLength="35.5" lengthAdjust="spacingAndGlyphs">MEAS</text>
<text x="748" y="343.0" font-size="14" fill="#fff" stroke="#fff" stroke-width="0.25" textLength="33" lengthAdjust="spacingAndGlyphs">URES</text>
<rect x="739.5" y="365.5" width="51" height="50" rx="4" fill="#000" stroke="#262626"/>
<text x="748" y="388.0" font-size="14" fill="#fff" stroke="#fff" stroke-width="0.25" textLength="34" lengthAdjust="spacingAndGlyphs">SAVE</text>
<text x="754.5" y="403.0" font-size="14" fill="#fff" stroke="#fff" stroke-width="0.25" textLength="21.5" lengthAdjust="spacingAndGlyphs">PIC</text>
<rect x="739.5" y="425.5" width="51" height="50" rx="4" fill="#000" stroke="#262626"/>
<text x="747.5" y="448.0" font-size="14" fill="#fff" stroke="#fff" stroke-width="0.25" textLength="35.0" lengthAdjust="spacingAndGlyphs">SAVE</text>
<text x="746" y="463.0" font-size="14" fill="#fff" stroke="#fff" stroke-width="0.25" textLength="38.5" lengthAdjust="spacingAndGlyphs">WAVE</text>
<rect x="3" y="453" width="143" height="25" rx="4" fill="#222"/>
<rect x="6" y="456" width="19" height="19" fill="#ffff00" />
<text class="m" x="15.7" y="470" font-size="14.5" font-weight="bold" fill="#000" text-anchor="middle">1</text>
<text class="m" x="38.400000000000006" y="471.1" font-size="15.7" fill="#fff" stroke="#fff" stroke-width="0.3">VPP</text>
<path fill="#fff" d="M76.65 463.4h2.7v2.2h-2.7zM76.65 467.4h2.7v2.2h-2.7z"/>
<text class="m" x="84.10000000000001" y="471.1" font-size="14" fill="#fff" stroke="#fff" stroke-width="0.15" textLength="16.6" lengthAdjust="spacingAndGlyphs">OV</text>
<rect x="148" y="453" width="143" height="25" rx="4" fill="#222"/>
<rect x="151" y="456" width="19" height="19" fill="#ffff00" />
<text class="m" x="160.7" y="470" font-size="14.5" font-weight="bold" fill="#000" text-anchor="middle">1</text>
<text class="m" x="179.0" y="471.1" font-size="15.7" fill="#fff" stroke="#fff" stroke-width="0.3">Vrms</text>
<path fill="#fff" d="M221.85 463.4h2.7v2.2h-2.7zM221.85 467.4h2.7v2.2h-2.7z"/>
<text class="m" x="229.4" y="471.1" font-size="14" fill="#fff" stroke="#fff" stroke-width="0.15" textLength="41.2" lengthAdjust="spacingAndGlyphs">4.21V</text>
<rect x="293" y="453" width="143" height="25" rx="4" fill="#222"/>
<rect x="296" y="456" width="19" height="19" fill="#ffff00" />
<text class="m" x="305.7" y="470" font-size="14.5" font-weight="bold" fill="#000" text-anchor="middle">1</text>
<text class="m" x="325.8" y="471.1" font-size="15.3" fill="#fff" stroke="#fff" stroke-width="0.12">Freq</text>
<path fill="#fff" d="M366.65 463.4h2.7v2.2h-2.7zM366.65 467.4h2.7v2.2h-2.7z"/>
<text class="m" x="374.4" y="471.1" font-size="14" fill="#fff" stroke="#fff" stroke-width="0.15" textLength="24.8" lengthAdjust="spacingAndGlyphs">OHz</text>
<rect x="438" y="453" width="143" height="25" rx="4" fill="#222"/>
<rect x="441" y="456" width="19" height="19" fill="#00ffff" />
<text class="m" x="450.7" y="470" font-size="14.5" font-weight="bold" fill="#000" text-anchor="middle">2</text>
<text class="m" x="473.4" y="471.1" font-size="15.7" fill="#fff" stroke="#fff" stroke-width="0.3">VPP</text>
<path fill="#fff" d="M511.65 463.4h2.7v2.2h-2.7zM511.65 467.4h2.7v2.2h-2.7z"/>
<text class="m" x="519.1" y="471.1" font-size="14" fill="#fff" stroke="#fff" stroke-width="0.15" textLength="16.6" lengthAdjust="spacingAndGlyphs">OV</text>
<rect x="583" y="453" width="143" height="25" rx="4" fill="#222"/>
<rect x="586" y="456" width="19" height="19" fill="#00ffff" />
<text class="m" x="595.7" y="470" font-size="14.5" font-weight="bold" fill="#000" text-anchor="middle">2</text>
<text class="m" x="615.8000000000001" y="471.1" font-size="15.3" fill="#fff" stroke="#fff" stroke-width="0.12">Freq</text>
<path fill="#fff" d="M656.65 463.4h2.7v2.2h-2.7zM656.65 467.4h2.7v2.2h-2.7z"/>
<text class="m" x="664.4" y="471.1" font-size="14" fill="#fff" stroke="#fff" stroke-width="0.15" textLength="24.8" lengthAdjust="spacingAndGlyphs">OHz</text>
</svg></body></html>
